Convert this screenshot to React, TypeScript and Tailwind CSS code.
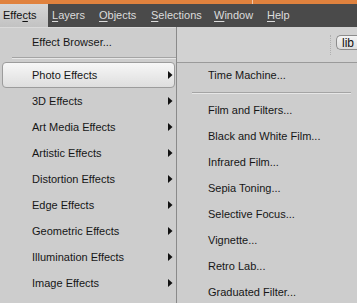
import React from "react";

const font = { fontFamily: '"Liberation Sans", Arial, sans-serif' };

function Arrow() {
  return (
    <svg width="5" height="8" viewBox="0 0 5 8" className="absolute left-[168px] top-1/2 -translate-y-1/2">
      <path d="M0 0 L4.5 4 L0 8 Z" fill="#111" />
    </svg>
  );
}

function LeftItem({ label, active }: { label: string; active?: boolean }) {
  return (
    <div className="relative h-[26px] flex items-center">
      {active && (
        <div className="absolute left-[2px] right-[1px] top-0 bottom-0 rounded-[4px] border border-[#9c9c9c] bg-gradient-to-b from-[#f7f7f7] to-[#dedede]" />
      )}
      <span className="relative pl-[32px] text-[11px] text-[#161616]">{label}</span>
      <Arrow />
    </div>
  );
}

function SubItem({ label }: { label: string }) {
  return (
    <div className="h-[26px] flex items-center pl-[31px] text-[11px] text-[#161616]">{label}</div>
  );
}

function MenuBarItem({ pre, u, post, active, w }: { pre: string; u: string; post: string; active?: boolean; w: string }) {
  return (
    <div
      className={
        "h-full flex items-center text-[11px] " +
        w +
        (active
          ? " bg-gradient-to-b from-[#d6d6d6] to-[#c2c2c2] text-[#111] pl-[3px]"
          : " text-[#dcdcdc]")
      }
    >
      <span>
        {pre}
        <span className="underline underline-offset-[2px]">{u}</span>
        {post}
      </span>
    </div>
  );
}

export default function App() {
  const left = [
    "3D Effects",
    "Art Media Effects",
    "Artistic Effects",
    "Distortion Effects",
    "Edge Effects",
    "Geometric Effects",
    "Illumination Effects",
    "Image Effects",
  ];
  const sub = [
    "Film and Filters...",
    "Black and White Film...",
    "Infrared Film...",
    "Sepia Toning...",
    "Selective Focus...",
    "Vignette...",
    "Retro Lab...",
    "Graduated Filter...",
  ];
  return (
    <div className="w-[357px] h-[303px] overflow-hidden bg-[#cfcfcf] flex flex-col" style={font}>
      <div className="h-[4px] shrink-0 bg-[#e0823e] relative">
        <div className="absolute left-[252px] top-0 w-[1px] h-[4px] bg-[#f2c8a8]" />
      </div>
      <div className="h-[23px] shrink-0 bg-[#4a4a4a] flex">
        <MenuBarItem pre="Effe" u="c" post="ts" active w="w-[48px]" />
        <div className="w-[4px]" />
        <MenuBarItem pre="" u="L" post="ayers" w="w-[47px]" />
        <MenuBarItem pre="" u="O" post="bjects" w="w-[52px]" />
        <MenuBarItem pre="" u="S" post="elections" w="w-[63px]" />
        <MenuBarItem pre="" u="W" post="indow" w="w-[53px]" />
        <MenuBarItem pre="" u="H" post="elp" w="w-[40px]" />
      </div>
      <div className="flex flex-1 min-h-0">
        <div className="w-[176px] shrink-0 bg-[#cdcdcd] border-t border-[#dadada] pt-[1px]">
          <div className="h-[26px] flex items-center pl-[32px] text-[11px] text-[#161616]">Effect Browser...</div>
          <div className="h-[7px] pt-[2px] pl-[12px]">
            <div className="h-[1px] bg-[#a4a4a4]" />
            <div className="h-[1px] bg-[#e6e6e6]" />
          </div>
          <LeftItem label="Photo Effects" active />
          {left.map((l) => (
            <LeftItem key={l} label={l} />
          ))}
        </div>
        <div className="w-[1px] bg-[#8a8a8a] shrink-0" />
        <div className="flex-1 flex flex-col min-w-0">
          <div className="h-[35px] shrink-0 bg-[#d2d2d2] flex items-start justify-end pt-[8px]">
            <div className="w-[3px] h-[20px] mr-[3px] border-l border-dotted border-[#b0b0b0]" />
            <div className="w-[21px] h-[15px] rounded-l-[5px] border border-r-0 border-[#8c8c8c] bg-gradient-to-b from-[#f4f4f4] to-[#dcdcdc] flex items-center pl-[5px] text-[12px] text-[#111]">
              lib
            </div>
          </div>
          <div className="flex-1 bg-[#cdcdcd] border-t border-[#9a9a9a]">
            <div className="h-[25px] flex items-center pl-[31px] text-[11px] text-[#161616]">Time Machine...</div>
            <div className="h-[9px] pt-[4px] pl-[15px] pr-[6px]">
              <div className="h-[1px] bg-[#a4a4a4]" />
              <div className="h-[1px] bg-[#e6e6e6]" />
            </div>
            {sub.map((s) => (
              <SubItem key={s} label={s} />
            ))}
          </div>
        </div>
      </div>
    </div>
  );
}
